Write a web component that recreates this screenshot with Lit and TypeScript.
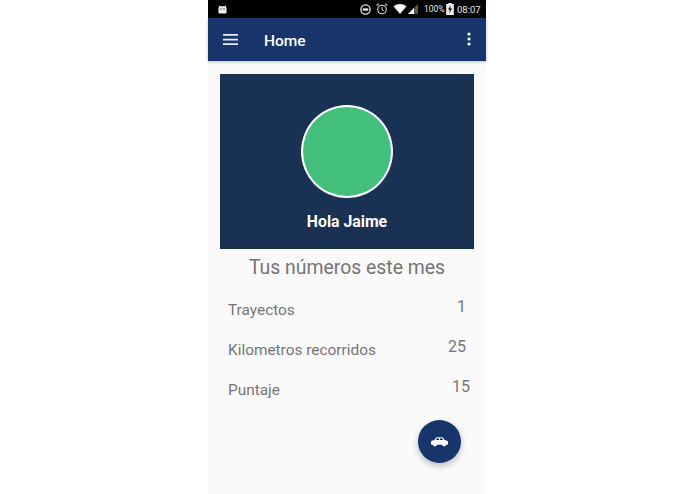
import { LitElement, html, css } from "lit";
import { customElement } from "lit/decorators.js";

const rows = [
  { label: "Trayectos", value: "1", inset: 8 },
  { label: "Kilometros recorridos", value: "25", inset: 8 },
  { label: "Puntaje", value: "15", inset: 4 },
];

@customElement("app-root")
export class AppRoot extends LitElement {
  static styles = css`
    :host { display: block; width: 695px; height: 494px; background: #fff; font-family: Roboto, "Liberation Sans", sans-serif; overflow: hidden; }
    .phone { position: relative; width: 278px; height: 494px; margin-left: 208px; background: #fafafa; display: flex; flex-direction: column; }
    .status { height: 18px; background: #000; color: #e8e8e8; display: flex; align-items: center; padding: 0 6px 0 10px; }
    .status svg { display: block; }
    .android { margin-right: auto; }
    .s1 { margin-right: 5px; }
    .s2 { margin-right: 5px; }
    .s3 { margin-right: 1px; }
    .s4 { margin-right: 6px; }
    .pct { font-size: 8.500px; margin-right: 3px; width: 19px; white-space: nowrap; }
    .time { font-size: 9.500px; margin-left: 3px; width: 23px; white-space: nowrap; }
    .bar { height: 43px; background: #17346b; box-shadow: 0 1px 3px rgba(0,0,0,.25); display: flex; align-items: center; padding: 0 15px; color: #fff; position: relative; }
    .title { font-size: 15.500px; font-weight: 500; line-height: 18px; padding-top: 2px; margin-left: 26px; flex: 1; }
    .dots { margin-top: -1px; }
    .content { padding: 13px 12px 0; display: flex; flex-direction: column; }
    .card { height: 175px; background: #193153; display: flex; flex-direction: column; align-items: center; padding-top: 31px; box-sizing: border-box; }
    .avatar { width: 92px; height: 93px; border-radius: 50%; background: #43bf7c; border: 2.500px solid #fff; box-sizing: border-box; }
    .hello { color: #fff; font-weight: 700; font-size: 15.800px; line-height: 19px; margin-top: 14px; }
    h2 { margin: 7px 0 0; font-weight: 400; font-size: 19.400px; line-height: 24px; color: #757575; text-align: center; }
    .rows { display: flex; flex-direction: column; gap: 20px; margin-top: 17px; color: #757575; font-size: 15.400px; }
    .row { display: flex; justify-content: space-between; height: 20px; padding-left: 8px; }
    .label { line-height: 20px; padding-top: 3px; }
    .value { font-size: 16px; line-height: 20px; }
    .fab { position: absolute; left: 210px; top: 420px; width: 43px; height: 43px; border-radius: 50%; background: #17346b; box-shadow: 0 3px 7px rgba(0,0,0,.25); display: flex; align-items: center; justify-content: center; }
  `;

  render() {
    return html`<div class="phone">
      <div class="status">
        <svg class="android" width="9" height="10" viewBox="0 0 10 10"><path fill="#eee" d="M1 3V1l1.500 1h5L9 1v2l.5 1v4.500Q9.500 10 8 10H2Q.5 10 .5 8.500V4z"/><circle cx="3.300" cy="5" r=".8" fill="#333"/><circle cx="6.700" cy="5" r=".8" fill="#333"/></svg>
        <svg class="s1" width="11" height="11" viewBox="0 0 12 12"><circle cx="6" cy="6" r="5" fill="none" stroke="#eee" stroke-width="1.400"/><rect x="3" y="4.800" width="6" height="2.400" fill="#eee"/></svg>
        <svg class="s2" width="12" height="12" viewBox="0 0 12 12"><circle cx="6" cy="6.500" r="4.300" fill="none" stroke="#ddd" stroke-width="1.100"/><path d="M6 4v2.700l1.800 1" fill="none" stroke="#ddd"/><path d="M.6 2.600 2.800.8M11.400 2.600 9.200.8" stroke="#ddd" stroke-width="1.100"/></svg>
        <svg class="s3" width="14" height="10" viewBox="0 0 13 10"><path fill="#fff" d="M0 2.200Q6.500-2 13 2.200L6.500 10z"/></svg>
        <svg class="s4" width="10" height="10" viewBox="0 0 10 10"><path fill="#555" d="M10 0v10H0z"/><path fill="#fff" d="M6 4v6H0z"/></svg>
        <span class="pct">100%</span>
        <svg width="8" height="12" viewBox="0 0 7 11"><path fill="#eee" d="M2 0h3v1h2v10H0V1h2z"/><path fill="#111" d="M4 2 1.700 6h1.500L3 9.500 5.400 5H3.800z"/></svg>
        <span class="time">08:07</span>
      </div>
      <div class="bar">
        <svg width="15" height="11" viewBox="0 0 15 11"><path fill="#e8edf5" d="M0 0h15v1.700H0zM0 4.700h15v1.700H0zM0 9.300h15V11H0z"/></svg>
        <span class="title">Home</span>
        <svg class="dots" width="4" height="14" viewBox="0 0 4 14"><circle cx="2" cy="2" r="1.600" fill="#fff"/><circle cx="2" cy="7" r="1.600" fill="#fff"/><circle cx="2" cy="12" r="1.600" fill="#fff"/></svg>
      </div>
      <div class="content">
        <div class="card">
          <div class="avatar"></div>
          <div class="hello">Hola Jaime</div>
        </div>
        <h2>Tus números este mes</h2>
        <div class="rows">
          ${rows.map(r => html`<div class="row">
            <span class="label">${r.label}</span>
            <span class="value" style="margin-right:${r.inset}px">${r.value}</span>
          </div>`)}
        </div>
      </div>
      <div class="fab">
        <svg width="17" height="10" viewBox="0 0 18 10"><path fill="#fff" fill-rule="evenodd" d="M0 5Q0 3.600 1.500 3.300L3.500 3 5 .8Q5.500 0 6.500 0h5q1 0 1.500.8L14.500 3l2 .3Q18 3.600 18 5v2.500q0 .5-.5.5H16a2.200 2.200 0 0 1-4.300 0H6.300A2.200 2.200 0 0 1 2 8H.5Q0 8 0 7.500zM6.500 1 5 3h3.500V1zM9.500 1v2H13l-1.500-2z"/><circle cx="4.200" cy="8" r="1.300" fill="#fff"/><circle cx="13.800" cy="8" r="1.300" fill="#fff"/></svg>
      </div>
    </div>`;
  }
}
